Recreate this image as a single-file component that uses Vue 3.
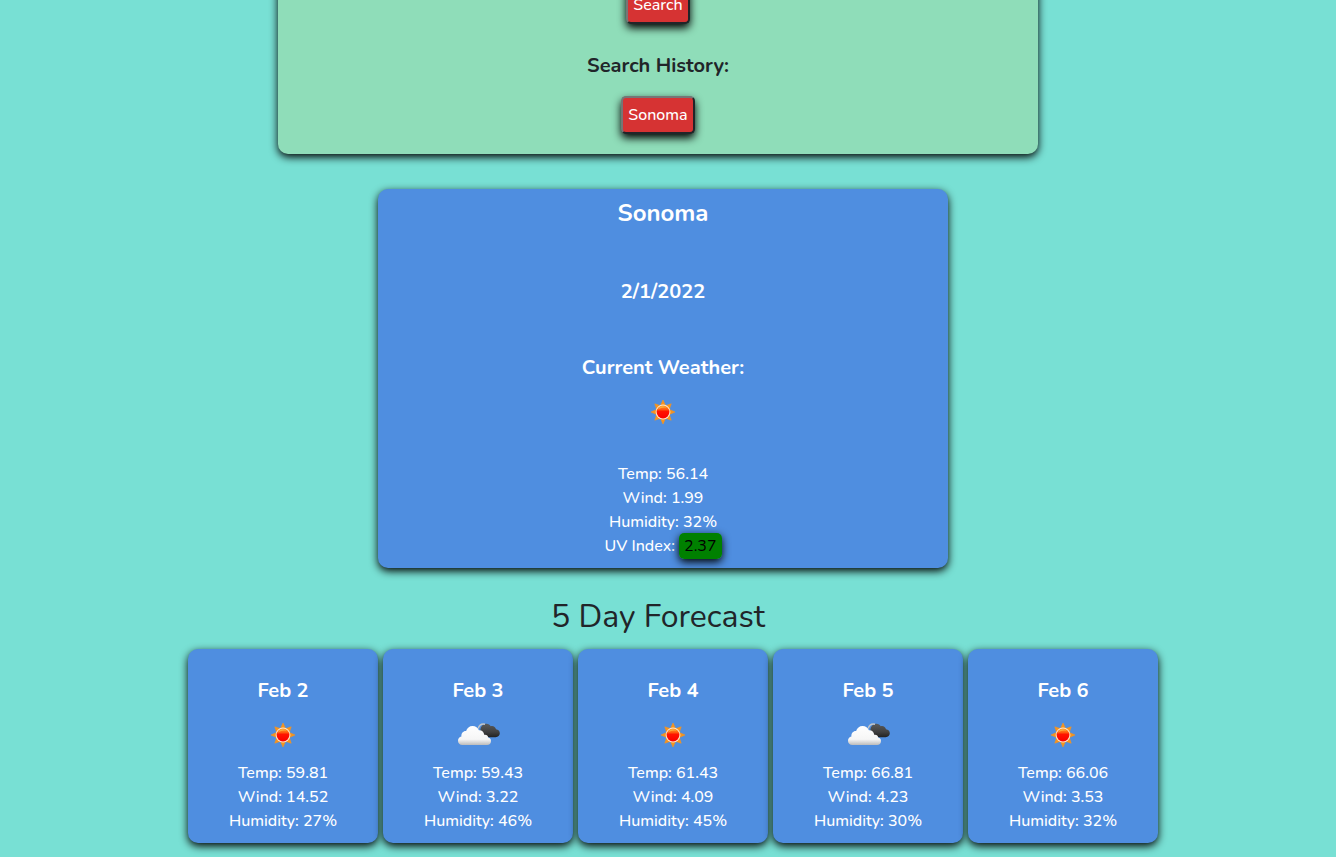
<script setup>
import { ref } from 'vue'

const history = ref(['Sonoma'])
const selected = ref('Sonoma')

const current = {
  date: '2/1/2022',
  icon: 'sun',
  temp: '56.14',
  wind: '1.99',
  humidity: '32%',
  uv: '2.37',
}

const forecast = [
  { day: 'Feb 2', icon: 'sun', temp: '59.81', wind: '14.52', humidity: '27%' },
  { day: 'Feb 3', icon: 'clouds', temp: '59.43', wind: '3.22', humidity: '46%' },
  { day: 'Feb 4', icon: 'sun', temp: '61.43', wind: '4.09', humidity: '45%' },
  { day: 'Feb 5', icon: 'clouds', temp: '66.81', wind: '4.23', humidity: '30%' },
  { day: 'Feb 6', icon: 'sun', temp: '66.06', wind: '3.53', humidity: '32%' },
]
</script>

<template>
  <svg class="defs" width="0" height="0" aria-hidden="true">
    <defs>
      <linearGradient id="sun-core" x1="0" y1="0" x2="0" y2="1">
        <stop offset="0" stop-color="#ff9a20" />
        <stop offset="0.3" stop-color="#ff5a10" />
        <stop offset="0.45" stop-color="#ff1400" />
        <stop offset="1" stop-color="#fa0000" />
      </linearGradient>
      <linearGradient id="cloud-light" x1="0" y1="0" x2="0" y2="1">
        <stop offset="0" stop-color="#ffffff" />
        <stop offset="0.7" stop-color="#f6f6f6" />
        <stop offset="1" stop-color="#bcbcbc" />
      </linearGradient>
      <linearGradient id="cloud-dark" x1="0" y1="0" x2="0" y2="1">
        <stop offset="0" stop-color="#5a5a5a" />
        <stop offset="0.6" stop-color="#404040" />
        <stop offset="1" stop-color="#222222" />
      </linearGradient>
      <symbol id="sun" viewBox="0 0 50 50">
        <path
          fill="#f7941d"
          d="M25 13 27.600 18.700 33.200 16.800 31.300 22.400 37 25 31.300 27.600 33.200 33.200 27.600 31.300 25 37 22.400 31.300 16.800 33.200 18.700 27.600 13 25 18.700 22.400 16.800 16.800 22.400 18.700Z"
          stroke="#f7941d"
          stroke-width="0.600"
        />
        <circle cx="25" cy="25" r="7.4" fill="#ffe6cc" />
        <circle cx="25" cy="25" r="6.4" fill="url(#sun-core)" />
        <path fill="#ffc64d" fill-opacity="0.6" d="M19.9 22.400a5.600 5.600 0 0 1 9-1.600q-4.600-.8-9 1.600Z" />
      </symbol>
      <symbol id="clouds" viewBox="0 0 50 50">
        <path
          fill="url(#cloud-dark)"
          d="M29 25c-1-1-1.500-2-1.500-3.500-.5-3.500 1-6.500 4.500-7.500 2.500-.7 4.700.300 5.700 2.200 2.300-.8 4.800.500 5.300 3.100 2.400.200 3.800 1.900 3.800 4 0 2.300-1.700 3.900-4.200 3.900H31Z"
        />
        <path fill="none" stroke="#c2c5c8" stroke-width="1.400" d="M25.200 18.500c1-3.500 3.600-4.900 6.800-4.300" />
        <path
          fill="url(#cloud-light)"
          d="M9.500 35C6.700 35 5 33.200 5 30.700c0-2.200 1.300-3.800 3.400-4.200-.3-3.300 1.900-5.600 4.700-5.400.9-3.100 3.300-5.100 6.500-5.100 3 0 5.300 1.600 6.300 4.300 2.800-.3 5.100 1.700 5.300 4.500 2.300-.4 3.800.9 4 2.700 1.900.300 2.800 1.700 2.800 3.400 0 2.500-1.500 4.100-4 4.100Z"
        />
      </symbol>
    </defs>
  </svg>

  <main class="page">
    <section class="panel search">
      <button type="button" class="btn">Search</button>
      <h2 class="history-title">Search History:</h2>
      <button
        v-for="city in history"
        :key="city"
        type="button"
        class="btn"
        @click="selected = city"
      >{{ city }}</button>
    </section>

    <section class="panel card current">
      <h1 class="city">{{ selected }}</h1>
      <h2 class="title date">{{ current.date }}</h2>
      <h2 class="title">Current Weather:</h2>
      <svg class="icon" role="img" aria-label="Weather"><use :href="'#' + current.icon" /></svg>
      <ul class="stats current-stats">
        <li>Temp: {{ current.temp }}</li>
        <li>Wind: {{ current.wind }}</li>
        <li>Humidity: {{ current.humidity }}</li>
        <li>UV Index: <span class="uv">{{ current.uv }}</span></li>
      </ul>
    </section>

    <h2 class="forecast-title">5 Day Forecast</h2>
    <section class="forecast">
      <article v-for="d in forecast" :key="d.day" class="panel card day">
        <h3 class="title">{{ d.day }}</h3>
        <svg class="icon" role="img" aria-label="Weather"><use :href="'#' + d.icon" /></svg>
        <ul class="stats">
          <li>Temp: {{ d.temp }}</li>
          <li>Wind: {{ d.wind }}</li>
          <li>Humidity: {{ d.humidity }}</li>
        </ul>
      </article>
    </section>
  </main>
</template>

<style>
body {
  margin: 0;
  background: #78e0d4;
}
</style>

<style scoped>
* {
  box-sizing: border-box;
}
h1,
h2,
h3,
ul {
  margin: 0;
  padding: 0;
}
.defs {
  position: absolute;
}
.page {
  display: flex;
  flex-direction: column;
  align-items: center;
  padding: 0 20px 14px 0;
  font-family: Nunito, Lato, "Open Sans", sans-serif;
  font-size: 16px;
  line-height: 24px;
  color: #212529;
}
.panel {
  display: flex;
  flex-direction: column;
  align-items: center;
  border-radius: 10px;
  box-shadow: 0 3px 8px #000;
}
.search {
  width: 100%;
  max-width: 760px;
  margin-top: -41px;
  padding: 27px 20px 20px;
  background: #8fddb9;
}
.btn {
  padding: 5px;
  font: inherit;
  font-weight: 500;
  color: #fff;
  background: #d63333;
  border: 2px solid;
  border-color: #767676 #212529 #212529 #767676;
  border-radius: 5px;
  box-shadow: 0 4px 8px #000;
  cursor: pointer;
}
.history-title {
  margin: 30px 0 18px;
  font-size: 20px;
  font-weight: 700;
}
.card {
  color: #fff;
  background: #4f8ee0;
}
.current {
  width: 100%;
  max-width: 570px;
  margin: 35px 0 0 10px;
  padding: 10px;
}
.city {
  font-size: 24px;
  line-height: 28px;
  font-weight: 700;
}
.title {
  font-size: 20px;
  line-height: 24px;
  font-weight: 700;
}
.date {
  margin: 53px 0 52px;
}
.icon {
  width: 50px;
  height: 50px;
  margin: 7px 0 1px;
}
.stats {
  list-style: none;
  text-align: center;
  font-weight: 500;
}
.current-stats {
  margin-top: 24px;
}
.uv {
  padding: 2px 5px;
  font-weight: 400;
  color: #000;
  background: #008000;
  border-radius: 5px;
  box-shadow: 0 3px 8px #000;
}
.forecast-title {
  margin: 30px 0 13px;
  font-size: 32px;
  line-height: 38px;
  font-weight: 400;
}
.forecast {
  display: grid;
  grid-template-columns: repeat(5, 1fr);
  gap: 5px;
  width: 100%;
  max-width: 1000px;
  padding-left: 30px;
}
.day {
  padding: 30px 10px 10px;
}
</style>
